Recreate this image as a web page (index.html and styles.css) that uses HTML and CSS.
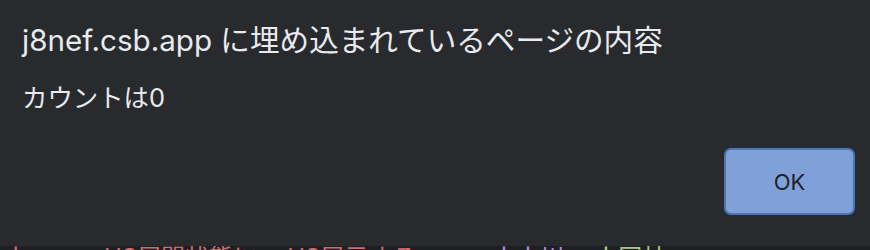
FILE: index.html
```html
<!DOCTYPE html>
<html lang="ja">
<head>
    <meta charset="UTF-8">
    <meta name="viewport" content="width=device-width, initial-scale=1.0">
    <title>Alert</title>
    <link rel="stylesheet" href="styles.css">
</head>
<body>
    <!-- Alert dialog -->
    <div class="dialog">
        <h1 class="dialog-title">j8nef.csb.app に埋め込まれているページの内容</h1>
        <p class="dialog-message">カウントは0</p>
        <div class="dialog-actions">
            <button class="ok-button">OK</button>
        </div>
    </div>

    <!-- Page behind the dialog -->
    <div class="behind">
        <span class="frag red">ｌ</span>
        <span class="frag grey">&lt;</span>
        <span class="frag red">HS展開状態に</span>
        <span class="frag red">HS展示する</span>
        <span class="frag grey">&gt;</span>
        <span class="frag purple">ｌｌ川</span>
        <span class="frag green">ｌ同社</span>
    </div>
</body>
</html>
```

FILE: styles.css
```css
/* Page */
body {
    margin: 0;
    width: 870px;
    height: 250px;
    overflow: hidden;
    background-color: #1e1f22;
    font-family: "Inter", "Noto Sans CJK JP", sans-serif;
}

/* Dialog */
.dialog {
    box-sizing: border-box;
    height: 246px;
    background-color: #292a2d;
    padding: 22px 15px 0 22px;
}

.dialog-title {
    margin: 0;
    color: #e8eaed;
    font-size: 29.6px;
    font-weight: 400;
    line-height: 36px;
}

.dialog-message {
    margin: 24px 0 0;
    color: #e8eaed;
    font-size: 25.4px;
    line-height: 32px;
}

.dialog-actions {
    display: flex;
    justify-content: flex-end;
    margin-top: 34px;
}

/* OK button */
.ok-button {
    width: 131px;
    height: 67px;
    background-color: #7fa0d8;
    border: 2px solid #4a78b6;
    border-radius: 7px;
    color: #1f2228;
    font-family: "Inter", sans-serif;
    font-size: 22px;
    padding: 0;
}

/* Strip of the page behind */
.behind {
    display: flex;
    gap: 30px;
    height: 4px;
    overflow: hidden;
    padding-left: 4px;
    font-size: 24px;
    line-height: 24px;
}

.frag {
    display: block;
}

.red { color: #d06a70; }
.grey { color: #aaaaaa; }
.purple { color: #b48ce0; }
.green { color: #a8c98a; }
```
